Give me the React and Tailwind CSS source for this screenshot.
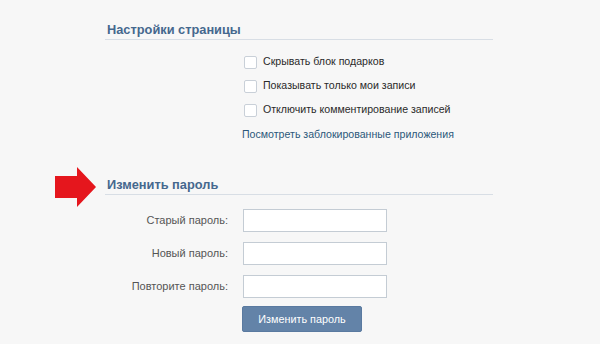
import React from "react";

const font = { fontFamily: "'Liberation Sans', Arial, sans-serif" };

function Checkbox({ label }) {
  return (
    <div className="flex items-center h-[24px]">
      <span className="w-[13px] h-[13px] border border-[#c9d0d8] bg-white rounded-[2px] shrink-0" />
      <span className="ml-[6px] text-[10.6px] text-[#2a2a2a] whitespace-nowrap">{label}</span>
    </div>
  );
}

function Field({ label }) {
  return (
    <div className="flex items-center h-[23px]">
      <div className="w-[123px] text-right text-[11px] text-[#555] whitespace-nowrap">{label}</div>
      <input
        type="password"
        className="ml-[15px] w-[144px] h-[23px] bg-white border border-[#c4ccd4] outline-none"
      />
    </div>
  );
}

function Arrow() {
  return (
    <svg
      className="absolute left-[-50px] top-[-11px]"
      width="42"
      height="41"
      viewBox="0 0 42 41"
    >
      <polygon
        points="0,9 22,9 22,0 41,20 22,40 22,31 0,31"
        fill="#e5161d"
      />
    </svg>
  );
}

export default function App() {
  return (
    <div
      className="w-[600px] h-[344px] bg-[#f7f7f7] overflow-hidden"
      style={font}
    >
      <div className="ml-[105px] w-[388px] pt-[23px]">
        <div className="h-[17px] border-b border-[#d8dee5] pl-[2px] text-[12.8px] font-bold leading-[14px] text-[#45688e] whitespace-nowrap">
          Настройки страницы
        </div>
        <div className="ml-[139px] mt-[10px]">
          <Checkbox label="Скрывать блок подарков" />
          <Checkbox label="Показывать только мои записи" />
          <Checkbox label="Отключить комментирование записей" />
        </div>
        <div className="ml-[137px] h-[26px] flex items-center text-[10.6px] text-[#2b587a] whitespace-nowrap">
          Посмотреть заблокированные приложения
        </div>
        <div className="relative mt-[30px] h-[17px] border-b border-[#d8dee5] pl-[2px] text-[12.8px] font-bold leading-[14px] text-[#45688e] whitespace-nowrap">
          <Arrow />
          Изменить пароль
        </div>
        <div className="mt-[14px] flex flex-col gap-[10px]">
          <Field label="Старый пароль:" />
          <Field label="Новый пароль:" />
          <Field label="Повторите пароль:" />
        </div>
        <div className="ml-[137px] mt-[8px]">
          <button className="w-[120px] h-[26px] rounded-[2px] bg-[#6383a8] text-white text-[10.8px] border border-[#5a7aa0]">
            Изменить пароль
          </button>
        </div>
      </div>
    </div>
  );
}
